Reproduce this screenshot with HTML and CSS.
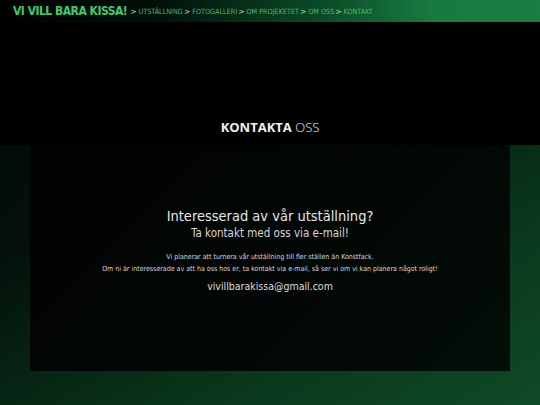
FILE: index.html
```html
<!DOCTYPE html>
<html lang="sv">
<head>
<meta charset="utf-8">
<title>Kontakta oss</title>
<link rel="stylesheet" href="styles.css">
</head>
<body>
<header class="topbar">
  <span class="brand">VI VILL BARA KISSA!</span>
  <nav class="crumbs">
    <span class="sep">&gt;</span><span class="item">UTSTÄLLNING</span>
    <span class="sep">&gt;</span><span class="item">FOTOGALLERI</span>
    <span class="sep">&gt;</span><span class="item">OM PROJEKETET</span>
    <span class="sep">&gt;</span><span class="item">OM OSS</span>
    <span class="sep">&gt;</span><span class="item">KONTAKT</span>
  </nav>
</header>
<section class="hero">
  <h1 class="hero-title"><b>KONTAKTA</b> <span class="light">OSS</span></h1>
</section>
<main class="stage">
  <div class="panel">
    <h2 class="q">Interesserad av vår utställning?</h2>
    <p class="sub">Ta kontakt med oss via e-mail!</p>
    <p class="small">Vi planerar att turnera vår utställning till fler ställen än Konstfack.<br>Om ni är interesserade av att ha oss hos er, ta kontakt via e-mail, så ser vi om vi kan planera något roligt!</p>
    <p class="mail">vivillbarakissa@gmail.com</p>
  </div>
</main>
</body>
</html>
```
FILE: styles.css
```css
* { box-sizing: border-box; margin: 0; padding: 0; }
html, body { width: 540px; height: 405px; overflow: hidden; }
body {
  font-family: "DejaVu Sans Condensed", "DejaVu Sans", sans-serif;
  color: #e6e6e6;
  background: linear-gradient(150deg, #020705 0%, #03100a 35%, #0a391d 75%, #0f4a26 100%);
}
.topbar {
  height: 22px;
  display: flex;
  align-items: center;
  padding-left: 13px;
  background: linear-gradient(90deg, #000 0%, #02110a 30%, #0b4825 58%, #177a40 80%, #1a7e43 100%);
}
.brand {
  font-family: "DejaVu Sans Condensed", sans-serif;
  font-weight: bold;
  font-size: 12px;
  letter-spacing: -0.5px;
  color: #3ccc6c;
}
.crumbs { display: flex; align-items: center; margin-left: 3px; padding-top: 1px; }
.sep { font-size: 7.5px; color: #a8e0b8; margin: 0 2px 0 0; font-family: "DejaVu Sans", sans-serif; }
.item {
  font-family: "DejaVu Sans Condensed", sans-serif;
  font-size: 7.2px;
  color: #45bb6e;
  margin-right: 1px;
}
.hero {
  height: 123px;
  background: #000;
  display: flex;
  justify-content: center;
  align-items: flex-end;
  padding-bottom: 9px;
}
.hero-title {
  font-family: "Open Sans", sans-serif;
  font-size: 13px;
  font-weight: normal;
  color: #f0f0f0;
}
.hero-title b { font-weight: bold; }
.hero-title .light { font-weight: 300; }
.stage { padding: 0 30px; }
.panel {
  height: 226px;
  background: linear-gradient(135deg, #010302 0%, #020604 50%, #040d08 100%);
  display: flex;
  flex-direction: column;
  align-items: center;
  padding-top: 62px;
  text-align: center;
}
.q { font-size: 14.5px; font-weight: normal; color: #e6e6e6; line-height: 18px; }
.sub { font-size: 11.5px; color: #d6d6d6; line-height: 14px; margin-top: 1px; }
.small { font-size: 7px; line-height: 12px; color: #d8d8d8; margin-top: 11px; }
.mail { font-size: 10.5px; color: #dcdcdc; line-height: 14px; margin-top: 4px; }
```
